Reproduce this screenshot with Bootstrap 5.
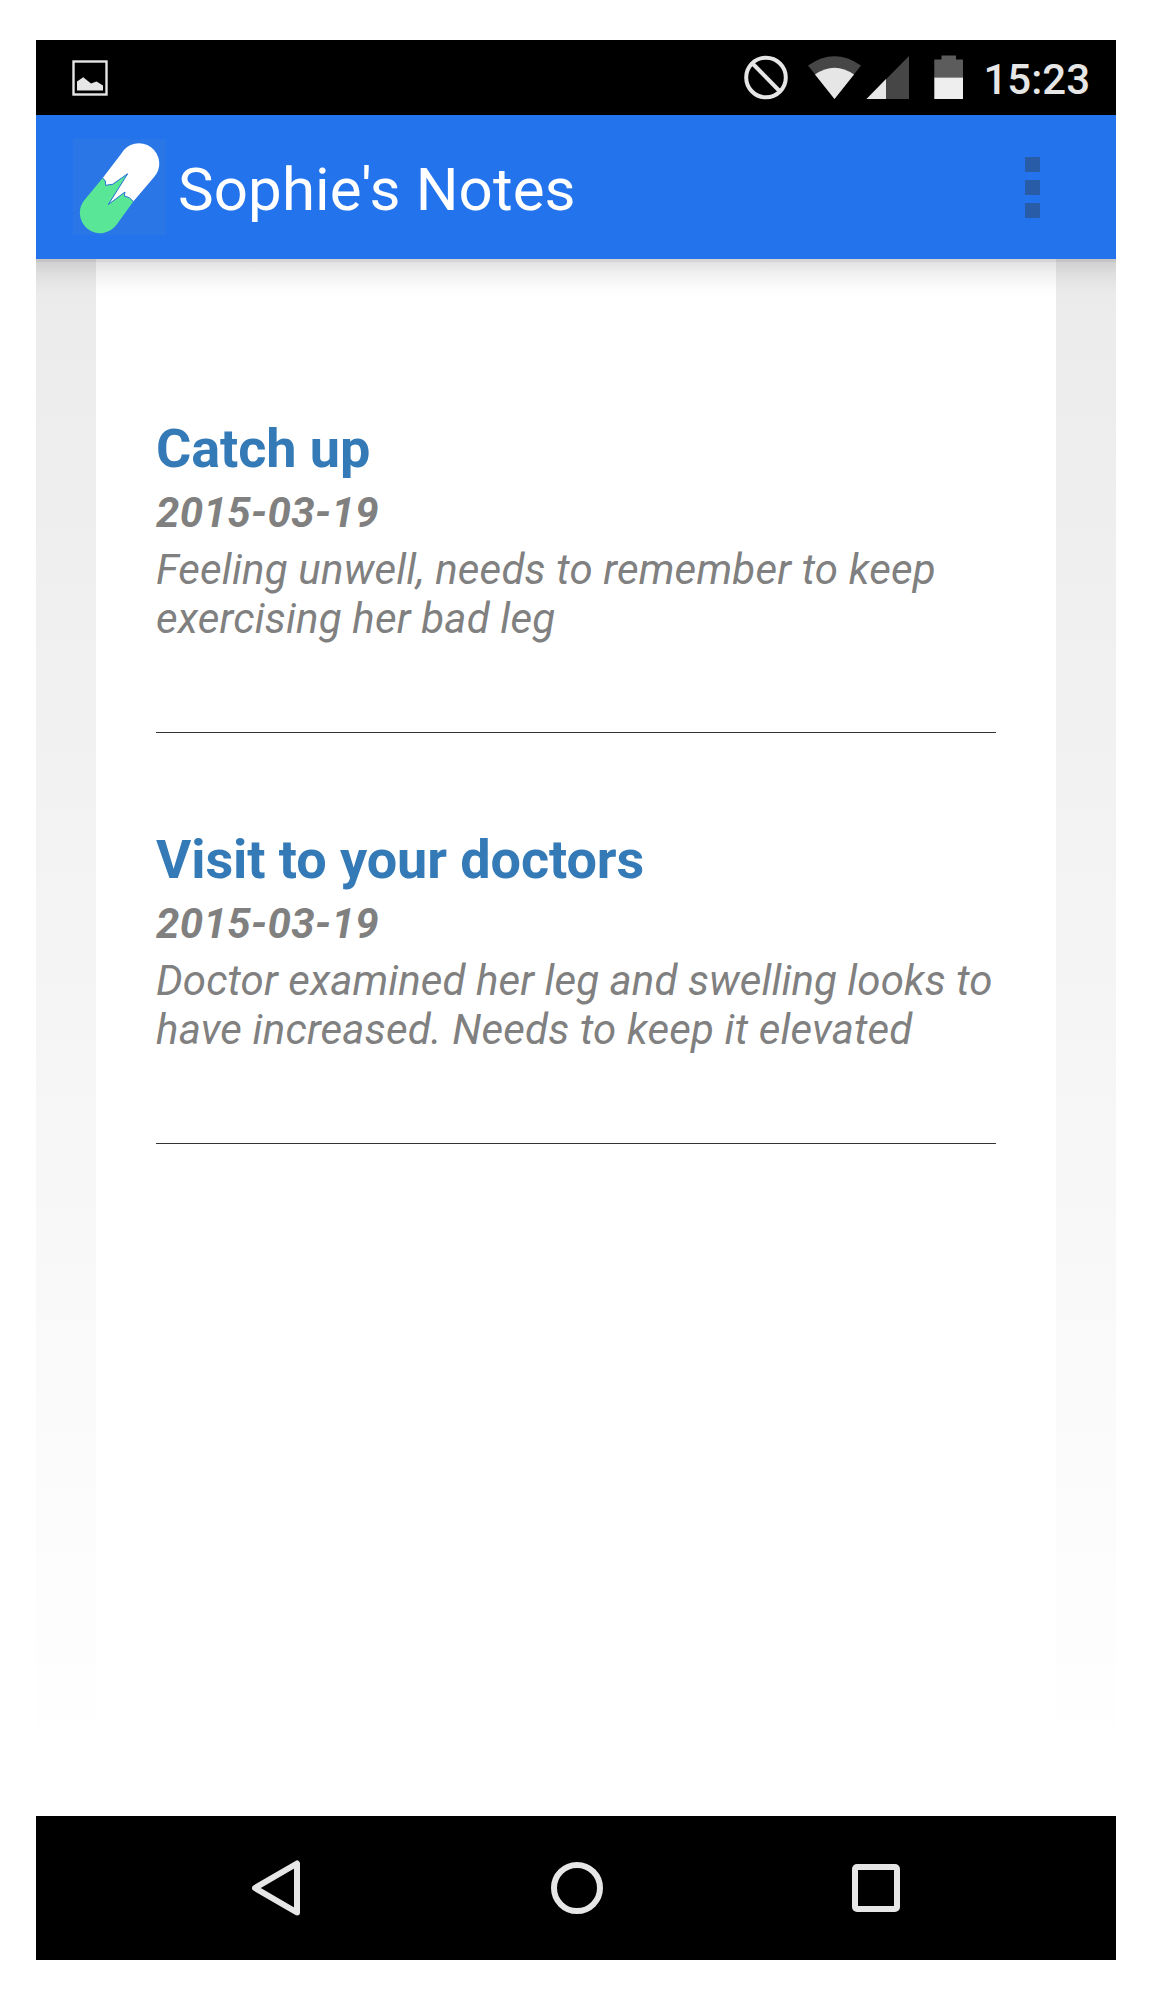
<!DOCTYPE html>
<html lang="en">
<head>
<meta charset="utf-8">
<meta name="viewport" content="width=device-width, initial-scale=1">
<title>Sophie's Notes</title>
<link rel="stylesheet" href="https://cdn.jsdelivr.net/npm/bootstrap@5.3.0/dist/css/bootstrap.min.css">
<style>
body{background:#fff;font-family:Roboto,sans-serif}
.phone{width:1080px;height:1920px;margin:40px auto}
.status-bar{height:75px;background:#000;padding:0 26px 0 36px;color:#e6e6e6}
.clock{font-size:42px;font-weight:500;line-height:49px;padding-top:3px;margin-left:19px}
.app-bar{height:144px;background:#2374ec;padding:0 76px 0 37px}
.app-bar::after{content:"";position:absolute;left:0;right:0;top:100%;height:38px;background:linear-gradient(rgba(0,0,0,.165) 3px,rgba(0,0,0,.115) 3px,rgba(0,0,0,.055) 15px,rgba(0,0,0,.015) 28px,transparent)}
.app-title{font-size:60px;line-height:70px;color:#fff;margin-left:12px;padding-top:5px;letter-spacing:.12px}
.dot{width:15px;height:15px;background:#295ca6}
.app-body{background:linear-gradient(#ebebeb 0,#fff 97%);padding:0 60px}
.sheet{background:#fff;padding:141px 60px 0}
.note{height:411px}
.note-title{font-size:54px;line-height:64px;color:#337ab7;padding-top:17px;letter-spacing:-.09px}
.note-date{font-size:42px;line-height:49px;padding-top:7px;letter-spacing:.4px}
.note-text{font-size:42px;line-height:49px;padding-top:8px;letter-spacing:.19px}
.note-text.tight::first-line{letter-spacing:.09px}
.note-copy{color:#808080;font-style:italic}
.note-rule{height:1px;background:#333;margin-top:89px}
.nav-keys{height:144px;background:#000;padding:0 216px}
</style>
</head>
<body>
<div class="phone d-flex flex-column">
  <div class="status-bar d-flex align-items-center flex-shrink-0">
    <svg width="36" height="36" viewBox="0 0 36 36"><rect x="1.500" y="1.500" width="33" height="33" fill="none" stroke="#e6e6e6" stroke-width="2.400"/><path d="M5 30.500V21.500L11.200 17.300 19 23.500 24.500 21.500 31 25.500V30.500Z" fill="#e6e6e6"/></svg>
    <svg class="ms-auto" width="220" height="45" viewBox="0 0 220 45">
      <circle cx="22" cy="22.500" r="19.800" fill="none" stroke="#e6e6e6" stroke-width="4"/>
      <path d="M9 9L35.500 36" stroke="#e6e6e6" stroke-width="4"/>
      <path d="M64 10.500Q90.500-8 117 10.500L90.500 44Z" fill="#464646"/>
      <path d="M71 19.500Q90.500 6 110 19.500L90.500 44Z" fill="#e6e6e6"/>
      <path d="M165 1V44H122.500Z" fill="#464646"/>
      <path d="M142 24V44H122.500Z" fill="#e6e6e6"/>
      <path d="M190.300 4.500H197.500V0.500H212V4.500H219V22.500H190.300Z" fill="#5c5c5c"/>
      <path d="M190.300 22.500H219V44H190.300Z" fill="#eee"/>
    </svg>
    <span class="clock">15:23</span>
  </div>
  <header class="app-bar d-flex align-items-center flex-shrink-0 position-relative">
    <svg width="93" height="96" viewBox="0 0 93 96"><rect width="93" height="96" fill="#2a76e6"/>
      <path d="M29.700 39L48.200 14.800A20.300 20.300 0 1 1 80.500 38.800L60.300 62.600 56.300 58.700 51.300 57 52 53 35.300 65.600 54.700 34.700 39.700 45.300 32.700 46.300 32.300 42Z" fill="#fff"/>
      <path d="M29.700 39L12.300 60A20.300 20.300 0 1 0 43.900 85.300L60.300 62.600 56.300 58.700 51.300 57 52 53 35.300 65.600 54.700 34.700 39.700 45.300 32.700 46.300 32.300 42Z" fill="#59e797"/>
      <path d="M29.700 39L32.300 42 32.700 46.300 39.700 45.300 54.700 34.700 35.300 65.600 52 53 51.300 57 56.300 58.700 60.300 62.600" fill="none" stroke="#2a76d6"/>
    </svg>
    <span class="app-title">Sophie's Notes</span>
    <div class="ms-auto d-flex flex-column gap-2"><i class="dot"></i><i class="dot"></i><i class="dot"></i></div>
  </header>
  <main class="app-body flex-grow-1">
    <div class="sheet h-100">
      <article class="note"><h2 class="note-title fw-bold m-0">Catch up</h2>
        <div class="note-copy note-date fw-bold">2015-03-19</div>
        <p class="note-copy note-text m-0">Feeling unwell, needs to remember to keep exercising her bad leg</p>
        <div class="note-rule"></div></article>
      <article class="note"><h2 class="note-title fw-bold m-0">Visit to your doctors</h2>
        <div class="note-copy note-date fw-bold">2015-03-19</div>
        <p class="note-copy note-text tight m-0">Doctor examined her leg and swelling looks to have increased. Needs to keep it elevated</p>
        <div class="note-rule"></div></article>
    </div>
  </main>
  <nav class="nav-keys d-flex align-items-center justify-content-between flex-shrink-0">
    <svg width="49" height="56" viewBox="0 0 49 56"><path d="M45 3.500V52.500L3 28Z" fill="none" stroke="#e6e6e6" stroke-width="6" stroke-linejoin="round"/></svg>
    <svg width="52" height="52" viewBox="0 0 52 52"><circle cx="26" cy="26" r="23" fill="none" stroke="#e6e6e6" stroke-width="6"/></svg>
    <svg width="48" height="48" viewBox="0 0 48 48"><rect x="3" y="3" width="42" height="42" rx="2" fill="none" stroke="#e6e6e6" stroke-width="6"/></svg>
  </nav>
</div>
<script src="https://cdn.jsdelivr.net/npm/bootstrap@5.3.0/dist/js/bootstrap.bundle.min.js"></script>
</body>
</html>
